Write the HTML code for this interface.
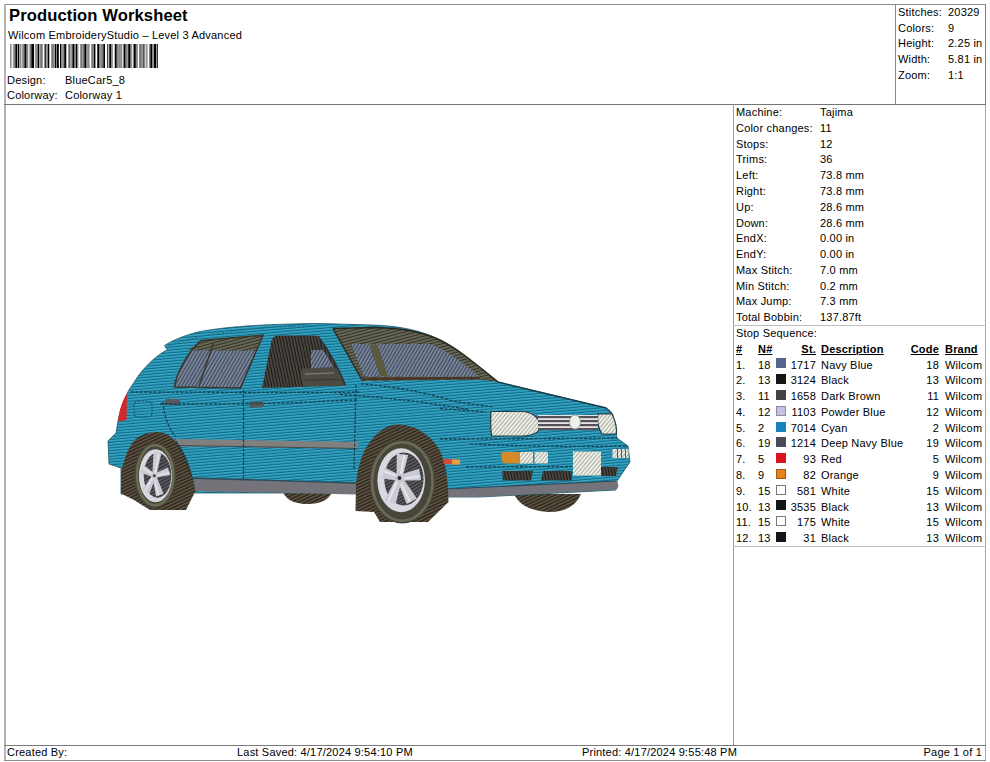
<!DOCTYPE html>
<html><head><meta charset="utf-8">
<style>
html,body{margin:0;padding:0;background:#fff;width:990px;height:762px;overflow:hidden;position:relative}
body{font-family:"Liberation Sans",sans-serif;font-size:11px;line-height:12px;color:#000;letter-spacing:0.2px}
.t{position:absolute;white-space:nowrap}
.ln{position:absolute;background:#8a8a8a}
.b{font-weight:bold;text-decoration:underline}
.r{text-align:right}
.sw{position:absolute;width:10px;height:10px;box-sizing:border-box}
#car{position:absolute;left:0;top:0}
</style></head><body>
<!-- frame lines -->
<div class="ln" style="left:4px;top:4px;width:982px;height:1px"></div>
<div class="ln" style="left:4px;top:4px;width:2px;height:757px;background:#b4b4b4"></div>
<div class="ln" style="left:985px;top:4px;width:1px;height:101px;background:#808080"></div><div class="ln" style="left:985px;top:105px;width:1px;height:656px;background:#a8a8a8"></div>
<div class="ln" style="left:4px;top:760px;width:982px;height:1px"></div>
<div class="ln" style="left:4px;top:104px;width:982px;height:1px;background:#757575"></div>
<div class="ln" style="left:895px;top:4px;width:1px;height:100px"></div>
<div class="ln" style="left:733px;top:104px;width:1px;height:641px;background:#9a9a9a"></div>
<div class="ln" style="left:733px;top:325px;width:253px;height:1px;background:#c0c0c0"></div>
<div class="ln" style="left:733px;top:546px;width:253px;height:1px;background:#c0c0c0"></div>
<div class="ln" style="left:4px;top:745px;width:982px;height:1px;background:#7a7a7a"></div>

<!-- header -->
<div class="t" style="left:9px;top:6px;font:bold 16.6px/19px 'Liberation Sans';letter-spacing:0.1px">Production Worksheet</div>
<div class="t" style="left:8px;top:29px">Wilcom EmbroideryStudio – Level 3 Advanced</div>
<svg style="position:absolute;left:10px;top:44px" width="148" height="24" id="bc"><rect x="0" width="1" height="24" fill="#888"/><rect x="1" width="1" height="24" fill="#bbb"/><rect x="2" width="1" height="24" fill="#eee"/><rect x="3" width="1" height="24" fill="#999"/><rect x="4" width="1" height="24" fill="#888"/><rect x="5" width="1" height="24" fill="#444"/><rect x="6" width="1" height="24" fill="#000"/><rect x="7" width="1" height="24" fill="#999"/><rect x="8" width="1" height="24" fill="#000"/><rect x="9" width="1" height="24" fill="#aaa"/><rect x="10" width="1" height="24" fill="#888"/><rect x="11" width="1" height="24" fill="#ccc"/><rect x="12" width="1" height="24" fill="#999"/><rect x="13" width="1" height="24" fill="#888"/><rect x="14" width="1" height="24" fill="#555"/><rect x="15" width="1" height="24" fill="#000"/><rect x="16" width="1" height="24" fill="#777"/><rect x="17" width="1" height="24" fill="#888"/><rect x="18" width="1" height="24" fill="#ddd"/><rect x="19" width="1" height="24" fill="#bbb"/><rect x="20" width="1" height="24" fill="#777"/><rect x="21" width="1" height="24" fill="#444"/><rect x="22" width="1" height="24" fill="#000"/><rect x="23" width="1" height="24" fill="#000"/><rect x="24" width="1" height="24" fill="#eee"/><rect x="25" width="1" height="24" fill="#999"/><rect x="26" width="1" height="24" fill="#888"/><rect x="27" width="1" height="24" fill="#777"/><rect x="28" width="1" height="24" fill="#000"/><rect x="29" width="1" height="24" fill="#aaa"/><rect x="30" width="1" height="24" fill="#888"/><rect x="31" width="1" height="24" fill="#777"/><rect x="32" width="1" height="24" fill="#999"/><rect x="34" width="1" height="24" fill="#888"/><rect x="35" width="1" height="24" fill="#333"/><rect x="36" width="1" height="24" fill="#999"/><rect x="37" width="1" height="24" fill="#888"/><rect x="38" width="1" height="24" fill="#000"/><rect x="39" width="1" height="24" fill="#bbb"/><rect x="41" width="1" height="24" fill="#999"/><rect x="42" width="1" height="24" fill="#777"/><rect x="43" width="1" height="24" fill="#888"/><rect x="44" width="1" height="24" fill="#999"/><rect x="45" width="1" height="24" fill="#000"/><rect x="46" width="1" height="24" fill="#888"/><rect x="47" width="1" height="24" fill="#000"/><rect x="48" width="1" height="24" fill="#333"/><rect x="50" width="1" height="24" fill="#000"/><rect x="51" width="1" height="24" fill="#888"/><rect x="52" width="1" height="24" fill="#999"/><rect x="53" width="1" height="24" fill="#888"/><rect x="54" width="1" height="24" fill="#333"/><rect x="55" width="1" height="24" fill="#000"/><rect x="56" width="1" height="24" fill="#bbb"/><rect x="58" width="1" height="24" fill="#999"/><rect x="59" width="1" height="24" fill="#666"/><rect x="60" width="1" height="24" fill="#aaa"/><rect x="61" width="1" height="24" fill="#999"/><rect x="62" width="1" height="24" fill="#555"/><rect x="63" width="1" height="24" fill="#000"/><rect x="64" width="1" height="24" fill="#777"/><rect x="65" width="1" height="24" fill="#888"/><rect x="66" width="1" height="24" fill="#000"/><rect x="67" width="1" height="24" fill="#888"/><rect x="68" width="1" height="24" fill="#ccc"/><rect x="70" width="1" height="24" fill="#999"/><rect x="71" width="1" height="24" fill="#777"/><rect x="72" width="1" height="24" fill="#999"/><rect x="73" width="1" height="24" fill="#777"/><rect x="74" width="1" height="24" fill="#444"/><rect x="75" width="1" height="24" fill="#000"/><rect x="76" width="1" height="24" fill="#888"/><rect x="77" width="1" height="24" fill="#999"/><rect x="78" width="1" height="24" fill="#888"/><rect x="79" width="1" height="24" fill="#bbb"/><rect x="81" width="1" height="24" fill="#999"/><rect x="82" width="1" height="24" fill="#777"/><rect x="83" width="1" height="24" fill="#888"/><rect x="84" width="1" height="24" fill="#000"/><rect x="85" width="1" height="24" fill="#999"/><rect x="87" width="1" height="24" fill="#444"/><rect x="88" width="1" height="24" fill="#000"/><rect x="89" width="1" height="24" fill="#888"/><rect x="90" width="1" height="24" fill="#999"/><rect x="91" width="1" height="24" fill="#888"/><rect x="92" width="1" height="24" fill="#777"/><rect x="93" width="1" height="24" fill="#444"/><rect x="94" width="1" height="24" fill="#000"/><rect x="97" width="1" height="24" fill="#444"/><rect x="98" width="1" height="24" fill="#bbb"/><rect x="99" width="1" height="24" fill="#444"/><rect x="100" width="1" height="24" fill="#000"/><rect x="101" width="1" height="24" fill="#888"/><rect x="102" width="1" height="24" fill="#999"/><rect x="104" width="1" height="24" fill="#bbb"/><rect x="105" width="1" height="24" fill="#000"/><rect x="106" width="1" height="24" fill="#444"/><rect x="107" width="1" height="24" fill="#888"/><rect x="108" width="1" height="24" fill="#999"/><rect x="109" width="1" height="24" fill="#888"/><rect x="110" width="1" height="24" fill="#999"/><rect x="111" width="1" height="24" fill="#888"/><rect x="112" width="1" height="24" fill="#ddd"/><rect x="113" width="1" height="24" fill="#888"/><rect x="114" width="1" height="24" fill="#000"/><rect x="115" width="1" height="24" fill="#666"/><rect x="116" width="1" height="24" fill="#888"/><rect x="117" width="1" height="24" fill="#999"/><rect x="118" width="1" height="24" fill="#333"/><rect x="119" width="1" height="24" fill="#000"/><rect x="120" width="1" height="24" fill="#777"/><rect x="121" width="1" height="24" fill="#999"/><rect x="122" width="1" height="24" fill="#ddd"/><rect x="123" width="1" height="24" fill="#888"/><rect x="124" width="1" height="24" fill="#000"/><rect x="125" width="1" height="24" fill="#333"/><rect x="126" width="1" height="24" fill="#888"/><rect x="127" width="1" height="24" fill="#999"/><rect x="129" width="1" height="24" fill="#888"/><rect x="130" width="1" height="24" fill="#777"/><rect x="131" width="1" height="24" fill="#888"/><rect x="132" width="1" height="24" fill="#999"/><rect x="133" width="1" height="24" fill="#555"/><rect x="134" width="1" height="24" fill="#888"/><rect x="135" width="1" height="24" fill="#ccc"/><rect x="136" width="1" height="24" fill="#999"/><rect x="137" width="1" height="24" fill="#bbb"/><rect x="139" width="1" height="24" fill="#888"/><rect x="140" width="1" height="24" fill="#444"/><rect x="141" width="1" height="24" fill="#000"/><rect x="142" width="1" height="24" fill="#888"/><rect x="143" width="1" height="24" fill="#999"/><rect x="144" width="1" height="24" fill="#000"/><rect x="145" width="1" height="24" fill="#000"/><rect x="146" width="1" height="24" fill="#999"/><rect x="147" width="1" height="24" fill="#333"/></svg>
<div class="t" style="left:7px;top:74px">Design:</div>
<div class="t" style="left:65px;top:74px">BlueCar5_8</div>
<div class="t" style="left:7px;top:89px">Colorway:</div>
<div class="t" style="left:65px;top:89px">Colorway 1</div>

<div class="t" style="left:898px;top:6px">Stitches:</div><div class="t" style="left:948px;top:6px">20329</div>
<div class="t" style="left:898px;top:22px">Colors:</div><div class="t" style="left:948px;top:22px">9</div>
<div class="t" style="left:898px;top:37px">Height:</div><div class="t" style="left:948px;top:37px">2.25 in</div>
<div class="t" style="left:898px;top:53px">Width:</div><div class="t" style="left:948px;top:53px">5.81 in</div>
<div class="t" style="left:898px;top:69px">Zoom:</div><div class="t" style="left:948px;top:69px">1:1</div>

<!-- footer -->
<div class="t" style="left:7px;top:746px">Created By:</div>
<div class="t" style="left:237px;top:746px">Last Saved: 4/17/2024 9:54:10 PM</div>
<div class="t" style="left:582px;top:746px">Printed: 4/17/2024 9:55:48 PM</div>
<div class="t r" style="right:8px;top:746px">Page 1 of 1</div>

<!-- RIGHTPANEL -->
<div class="t" style="left:736px;top:106.0px">Machine:</div><div class="t" style="left:820px;top:106.0px">Tajima</div>
<div class="t" style="left:736px;top:121.8px">Color changes:</div><div class="t" style="left:820px;top:121.8px">11</div>
<div class="t" style="left:736px;top:137.6px">Stops:</div><div class="t" style="left:820px;top:137.6px">12</div>
<div class="t" style="left:736px;top:153.3px">Trims:</div><div class="t" style="left:820px;top:153.3px">36</div>
<div class="t" style="left:736px;top:169.1px">Left:</div><div class="t" style="left:820px;top:169.1px">73.8 mm</div>
<div class="t" style="left:736px;top:184.9px">Right:</div><div class="t" style="left:820px;top:184.9px">73.8 mm</div>
<div class="t" style="left:736px;top:200.7px">Up:</div><div class="t" style="left:820px;top:200.7px">28.6 mm</div>
<div class="t" style="left:736px;top:216.5px">Down:</div><div class="t" style="left:820px;top:216.5px">28.6 mm</div>
<div class="t" style="left:736px;top:232.2px">EndX:</div><div class="t" style="left:820px;top:232.2px">0.00 in</div>
<div class="t" style="left:736px;top:248.0px">EndY:</div><div class="t" style="left:820px;top:248.0px">0.00 in</div>
<div class="t" style="left:736px;top:263.8px">Max Stitch:</div><div class="t" style="left:820px;top:263.8px">7.0 mm</div>
<div class="t" style="left:736px;top:279.6px">Min Stitch:</div><div class="t" style="left:820px;top:279.6px">0.2 mm</div>
<div class="t" style="left:736px;top:295.4px">Max Jump:</div><div class="t" style="left:820px;top:295.4px">7.3 mm</div>
<div class="t" style="left:736px;top:311.1px">Total Bobbin:</div><div class="t" style="left:820px;top:311.1px">137.87ft</div>
<div class="t" style="left:736px;top:326.9px">Stop Sequence:</div>
<div class="t b" style="left:736px;top:342.7px">#</div><div class="t b" style="left:758px;top:342.7px">N#</div><div class="t b r" style="right:174px;top:342.7px">St.</div><div class="t b" style="left:821px;top:342.7px">Description</div><div class="t b r" style="right:51px;top:342.7px">Code</div><div class="t b" style="left:945px;top:342.7px">Brand</div>
<div class="t" style="left:736px;top:358.5px">1.</div><div class="t" style="left:758px;top:358.5px">18</div><div class="sw" style="left:776px;top:358px;background:#56638c;"></div><div class="t r" style="right:174px;top:358.5px">1717</div><div class="t" style="left:821px;top:358.5px">Navy Blue</div><div class="t r" style="right:51px;top:358.5px">18</div><div class="t" style="left:945px;top:358.5px">Wilcom</div>
<div class="t" style="left:736px;top:374.3px">2.</div><div class="t" style="left:758px;top:374.3px">13</div><div class="sw" style="left:776px;top:374px;background:#161616;"></div><div class="t r" style="right:174px;top:374.3px">3124</div><div class="t" style="left:821px;top:374.3px">Black</div><div class="t r" style="right:51px;top:374.3px">13</div><div class="t" style="left:945px;top:374.3px">Wilcom</div>
<div class="t" style="left:736px;top:390.0px">3.</div><div class="t" style="left:758px;top:390.0px">11</div><div class="sw" style="left:776px;top:390px;background:#424242;"></div><div class="t r" style="right:174px;top:390.0px">1658</div><div class="t" style="left:821px;top:390.0px">Dark Brown</div><div class="t r" style="right:51px;top:390.0px">11</div><div class="t" style="left:945px;top:390.0px">Wilcom</div>
<div class="t" style="left:736px;top:405.8px">4.</div><div class="t" style="left:758px;top:405.8px">12</div><div class="sw" style="left:776px;top:406px;background:#c4c2e0;border:1px solid #8c8aa8;"></div><div class="t r" style="right:174px;top:405.8px">1103</div><div class="t" style="left:821px;top:405.8px">Powder Blue</div><div class="t r" style="right:51px;top:405.8px">12</div><div class="t" style="left:945px;top:405.8px">Wilcom</div>
<div class="t" style="left:736px;top:421.6px">5.</div><div class="t" style="left:758px;top:421.6px">2</div><div class="sw" style="left:776px;top:422px;background:#1683bf;"></div><div class="t r" style="right:174px;top:421.6px">7014</div><div class="t" style="left:821px;top:421.6px">Cyan</div><div class="t r" style="right:51px;top:421.6px">2</div><div class="t" style="left:945px;top:421.6px">Wilcom</div>
<div class="t" style="left:736px;top:437.4px">6.</div><div class="t" style="left:758px;top:437.4px">19</div><div class="sw" style="left:776px;top:437px;background:#4b4b59;"></div><div class="t r" style="right:174px;top:437.4px">1214</div><div class="t" style="left:821px;top:437.4px">Deep Navy Blue</div><div class="t r" style="right:51px;top:437.4px">19</div><div class="t" style="left:945px;top:437.4px">Wilcom</div>
<div class="t" style="left:736px;top:453.2px">7.</div><div class="t" style="left:758px;top:453.2px">5</div><div class="sw" style="left:776px;top:453px;background:#d8141e;"></div><div class="t r" style="right:174px;top:453.2px">93</div><div class="t" style="left:821px;top:453.2px">Red</div><div class="t r" style="right:51px;top:453.2px">5</div><div class="t" style="left:945px;top:453.2px">Wilcom</div>
<div class="t" style="left:736px;top:468.9px">8.</div><div class="t" style="left:758px;top:468.9px">9</div><div class="sw" style="left:776px;top:469px;background:#e8801e;border:1px solid #a05a10;"></div><div class="t r" style="right:174px;top:468.9px">82</div><div class="t" style="left:821px;top:468.9px">Orange</div><div class="t r" style="right:51px;top:468.9px">9</div><div class="t" style="left:945px;top:468.9px">Wilcom</div>
<div class="t" style="left:736px;top:484.7px">9.</div><div class="t" style="left:758px;top:484.7px">15</div><div class="sw" style="left:776px;top:485px;background:#ffffff;border:1px solid #777;"></div><div class="t r" style="right:174px;top:484.7px">581</div><div class="t" style="left:821px;top:484.7px">White</div><div class="t r" style="right:51px;top:484.7px">15</div><div class="t" style="left:945px;top:484.7px">Wilcom</div>
<div class="t" style="left:736px;top:500.5px">10.</div><div class="t" style="left:758px;top:500.5px">13</div><div class="sw" style="left:776px;top:500px;background:#151515;"></div><div class="t r" style="right:174px;top:500.5px">3535</div><div class="t" style="left:821px;top:500.5px">Black</div><div class="t r" style="right:51px;top:500.5px">13</div><div class="t" style="left:945px;top:500.5px">Wilcom</div>
<div class="t" style="left:736px;top:516.3px">11.</div><div class="t" style="left:758px;top:516.3px">15</div><div class="sw" style="left:776px;top:516px;background:#ffffff;border:1px solid #777;"></div><div class="t r" style="right:174px;top:516.3px">175</div><div class="t" style="left:821px;top:516.3px">White</div><div class="t r" style="right:51px;top:516.3px">15</div><div class="t" style="left:945px;top:516.3px">Wilcom</div>
<div class="t" style="left:736px;top:532.1px">12.</div><div class="t" style="left:758px;top:532.1px">13</div><div class="sw" style="left:776px;top:532px;background:#151515;"></div><div class="t r" style="right:174px;top:532.1px">31</div><div class="t" style="left:821px;top:532.1px">Black</div><div class="t r" style="right:51px;top:532.1px">13</div><div class="t" style="left:945px;top:532.1px">Wilcom</div>
<!-- CAR -->
<svg id="car" width="990" height="762" viewBox="0 0 990 762">
<defs>
<pattern id="pTeal" width="8" height="2.8" patternUnits="userSpaceOnUse" patternTransform="rotate(-5)">
 <rect width="8" height="2.8" fill="#2895b4"/>
 <rect y="1.9" width="8" height="0.9" fill="#116888"/>
 <rect y="0.2" width="8" height="0.8" fill="#3fadca"/>
</pattern>
<pattern id="pDark" width="3" height="3" patternUnits="userSpaceOnUse" patternTransform="rotate(-12)">
 <rect width="3" height="3" fill="#4e4a44"/>
 <rect x="1.7" width="1.3" height="3" fill="#1e1b17"/>
</pattern>
<pattern id="pShadow" width="3" height="3" patternUnits="userSpaceOnUse" patternTransform="rotate(-25)">
 <rect width="3" height="3" fill="#675a48"/>
 <rect y="1.5" width="3" height="1.5" fill="#28231b"/>
</pattern>
<pattern id="pGlass" width="3" height="3" patternUnits="userSpaceOnUse" patternTransform="rotate(30)">
 <rect width="3" height="3" fill="#7c8aa0"/>
 <rect x="1.8" width="1.2" height="3" fill="#3c4657"/>
</pattern>
<pattern id="pFrame" width="3" height="3" patternUnits="userSpaceOnUse" patternTransform="rotate(75)">
 <rect width="3" height="3" fill="#6c6c5a"/>
 <rect x="1.8" width="1.2" height="3" fill="#33322a"/>
</pattern>
<pattern id="pWhite" width="3" height="3" patternUnits="userSpaceOnUse" patternTransform="rotate(40)">
 <rect width="3" height="3" fill="#eef0e8"/>
 <rect x="2" width="1" height="3" fill="#a9ada2"/>
</pattern>
<pattern id="pRim" width="3" height="3" patternUnits="userSpaceOnUse" patternTransform="rotate(-30)">
 <rect width="3" height="3" fill="#5c5c60"/>
 <rect y="1.8" width="3" height="1.2" fill="#2c2c30"/>
</pattern>
</defs>
<path d="M283,492 C287,502 298,504 308,504 C320,504 329,500 332,492 Z" fill="url(#pShadow)"/>
<path d="M514,494 C520,508 538,512 550,512 C565,512 576,506 581,494 Z" fill="url(#pShadow)"/>
<path d="M164.5,345.5 C175,339 186,335 200,331.5 C225,327 260,324 320,323.5 L372,325 C400,326 420,330 440,340 C460,350 478,366 498,382 L606,408 C612,413 615,425 617,438 L628,446 L630,462 L617,481 L616,490 L480,497 L446,497 L356,493 L195,493 L121,494 L121,468 L109,464 L108,441 L116,433 L118,421 C121,406 126,393 133,384 C140,372 152,358 167.5,349.5 Z" fill="url(#pTeal)"/>
<path d="M164.5,345.5 C175,339 186,335 200,331.5 C225,327 260,324 320,323.5 L372,325 C400,326 420,330 440,340 C460,350 478,366 498,382 L606,408 C612,413 615,425 617,438 L628,446 L630,462 L617,481 L616,490 L480,497 L446,497 L356,493 L195,493 L121,494 L121,468 L109,464 L108,441 L116,433 L118,421 C121,406 126,393 133,384 C140,372 152,358 167.5,349.5 Z" fill="none" stroke="#1d5566" stroke-width="1" opacity="0.8"/>
<path d="M201,340.6 L263,335.2 L240.5,388 L174.5,387 C176,375 186,354 201,340.6 Z" fill="url(#pGlass)"/>
<path d="M201,340.6 L263,335.2 L256.5,350.5 L188,350.5 Z" fill="url(#pFrame)"/>
<path d="M201,340.6 L263,335.2 L240.5,388 L174.5,387 C176,375 186,354 201,340.6 Z" fill="none" stroke="#3a372e" stroke-width="1.6"/>
<path d="M213.5,343 L199,386" stroke="#3d3a30" stroke-width="1.6"/>
<path d="M278,335.5 L316,335.5 C326,346 336,362 346,385.5 L262,388 L271.5,341 C272.5,337.5 274.5,335.5 278,335.5 Z" fill="url(#pDark)"/>
<path d="M311,350 L323,350 C327,356 331,362 334,368 L311,368 Z" fill="url(#pGlass)"/>
<path d="M302,368.5 L334,367 C340,371 344,378 346,386 L304,386 C301,381 301,374 302,368.5 Z" fill="#4d4a42"/>
<path d="M305,374 L334,373" stroke="#7a756a" stroke-width="1.3"/>
<path d="M305,380 L340,379.5" stroke="#3a3630" stroke-width="1"/>
<path d="M333,328.5 L372,327.5 C400,328 420,331 440,340 C460,350 478,366 498,382 L479,379.5 L362.5,381 Z" fill="url(#pFrame)"/>
<path d="M351,344 L431,344 C445,350 460,360 480,377 L364,376.5 Z" fill="url(#pGlass)"/>
<path d="M369,344.5 L377.5,344.5 L388,376 L380,376 Z" fill="#5a5a40"/>
<path d="M333,328.5 L372,327.5 C400,328 420,331 440,340 C460,350 478,366 498,382" stroke="#2a2a20" stroke-width="1.5" fill="none"/>
<path d="M363,379 L480,378" stroke="#4a3424" stroke-width="2.4" fill="none"/>
<path d="M333,328.5 L362.5,381" stroke="#2a2a22" stroke-width="1.4" fill="none"/>
<path d="M318,336 C327,348 337,364 345,385" stroke="#2a3436" stroke-width="1.6" fill="none"/>
<path d="M498,382 L606,408 C610,411 612,413 613,416" stroke="#1a3f4a" stroke-width="1.4" fill="none"/>
<path d="M176,439 L358,442 L358,448.5 L178,446.5 Z" fill="#82807e"/>
<path d="M178,445.5 L358,448.5" stroke="#3e4a50" stroke-width="1" fill="none"/>
<path d="M189,478 L356,483 L446,487.5 L446,497 L356,494.5 L190,491 C188,488 188,482 189,478 Z" fill="#74737a"/>
<path d="M189,478 L356,483 L446,487.5" stroke="#2a4a56" stroke-width="1.3" fill="none"/>
<path d="M446,489 L616,481 C619,483 619,488 616,489.5 L480,497 L446,497 Z" fill="#74737a"/>
<path d="M446,489 L616,481" stroke="#2a4a56" stroke-width="1.2" fill="none"/>
<path d="M121,493.5 L121,474 C123,462 127,450 133,442 C139,435 148,432 159,432 C170,433 180,443 186,457 C191,469 194,481 195.5,491 L186,510 L150,510 L134,500 Z" fill="url(#pShadow)"/>
<path d="M355.5,511 L356,486 C357,470 361,455 369,443 C377,432 387,424.5 398,424.5 C414,424.5 430,434 439,449 C446,462 448,478 448.5,502 L428,522 L380,522 L374,512 Z" fill="url(#pShadow)"/>
<ellipse cx="155.2" cy="475.3" rx="21" ry="32.8" fill="#48463a"/>
<ellipse cx="155.2" cy="475.3" rx="18.2" ry="29.999999999999996" fill="none" stroke="#6c6b55" stroke-width="2.6"/>
<ellipse cx="155.5" cy="475.8" rx="16.5" ry="26.5" fill="#d8d9e0"/>
<ellipse cx="157.5" cy="475.3" rx="13.8" ry="22.5" fill="url(#pRim)"/>
<path d="M156.3,476.0 L161.3,453.5 L153.5,452.5 L152.3,475.6Z" fill="#c9cad2"/>
<path d="M154.9,475.9 L158.7,453.2" stroke="#e4e5ec" stroke-width="1.5"/>
<path d="M154.9,477.7 L170.3,475.0 L167.8,467.4 L153.7,473.9Z" fill="#c9cad2"/>
<path d="M154.5,476.4 L169.5,472.4" stroke="#e4e5ec" stroke-width="1.5"/>
<path d="M152.4,476.4 L156.0,496.2 L163.6,493.9 L156.2,475.2Z" fill="#c9cad2"/>
<path d="M153.7,476.0 L158.6,495.4" stroke="#e4e5ec" stroke-width="1.5"/>
<path d="M152.5,474.9 L142.3,490.1 L149.3,493.7 L156.1,476.7Z" fill="#c9cad2"/>
<path d="M153.8,475.5 L144.7,491.3" stroke="#e4e5ec" stroke-width="1.5"/>
<path d="M155.3,474.1 L144.0,465.3 L140.2,472.3 L153.3,477.5Z" fill="#c9cad2"/>
<path d="M154.6,475.3 L142.7,467.7" stroke="#e4e5ec" stroke-width="1.5"/>
<circle cx="154.3" cy="475.8" r="2.9" fill="#c4c5cd"/>
<circle cx="154.3" cy="475.8" r="1.3" fill="#26262a"/>
<ellipse cx="402.3" cy="481.5" rx="33" ry="42" fill="#48463a"/>
<ellipse cx="402.3" cy="481.5" rx="30.2" ry="39.2" fill="none" stroke="#6c6b55" stroke-width="2.6"/>
<ellipse cx="401.2" cy="480.2" rx="23.8" ry="32" fill="#d8d9e0"/>
<ellipse cx="403.9" cy="479" rx="19.6" ry="26.5" fill="url(#pRim)"/>
<path d="M402.3,478.3 L408.2,455.1 L396.8,453.8 L396.5,477.7Z" fill="#c9cad2"/>
<path d="M400.3,478.1 L404.3,454.7" stroke="#e4e5ec" stroke-width="2.2"/>
<path d="M399.9,480.8 L421.1,480.2 L419.0,468.8 L398.9,475.2Z" fill="#c9cad2"/>
<path d="M399.6,478.8 L420.4,476.3" stroke="#e4e5ec" stroke-width="2.2"/>
<path d="M396.9,479.4 L406.7,503.9 L416.8,498.4 L401.9,476.6Z" fill="#c9cad2"/>
<path d="M398.6,478.4 L410.1,502.0" stroke="#e4e5ec" stroke-width="2.2"/>
<path d="M396.7,477.0 L384.8,499.9 L395.6,503.9 L402.1,479.0Z" fill="#c9cad2"/>
<path d="M398.6,477.7 L388.5,501.3" stroke="#e4e5ec" stroke-width="2.2"/>
<path d="M400.2,475.2 L385.0,467.5 L381.8,478.6 L398.6,480.8Z" fill="#c9cad2"/>
<path d="M399.6,477.2 L383.9,471.3" stroke="#e4e5ec" stroke-width="2.2"/>
<circle cx="399.4" cy="478" r="4.2" fill="#c4c5cd"/>
<circle cx="399.4" cy="478" r="1.9" fill="#26262a"/>
<path d="M127,394 L126.5,420 L118,421.5 C119,411 122,401 127,394 Z" fill="#d4282a"/>
<rect x="134" y="401" width="18" height="16" rx="4" fill="none" stroke="#1a5a6e" stroke-width="1.1" stroke-dasharray="2.5,1"/>
<rect x="165" y="399" width="15" height="6" rx="2.5" fill="#57585c"/>
<rect x="249" y="401.5" width="15" height="6" rx="2.5" fill="#57585c"/>
<path d="M491,411.5 L524,411.5 C534,413 540,419 540.5,426 C540,432 533,436 522,436 L491.5,436 C490.5,428 490.5,420 491,411.5 Z" fill="url(#pWhite)" stroke="#243e46" stroke-width="1.2"/>
<path d="M598,414 L612,414 C615,420 617,427 616.5,434 L602,434 C598,428 597,420 598,414 Z" fill="url(#pWhite)" stroke="#243e46" stroke-width="1.2"/>
<rect x="538" y="415" width="60" height="15" fill="#e4e4e4"/>
<rect x="538" y="416" width="60" height="2.2" fill="#57505a"/>
<rect x="538" y="420" width="60" height="2.2" fill="#57505a"/>
<rect x="538" y="424" width="60" height="2.2" fill="#57505a"/>
<rect x="538" y="428" width="60" height="2.2" fill="#57505a"/>
<ellipse cx="575" cy="422" rx="5.5" ry="7" fill="#eef0ea" stroke="#8a9a9a" stroke-width="0.8"/>
<path d="M502,452 L520,452 L520,463.5 L504,463.5 C501,461 501,455 502,452 Z" fill="#d48a28"/>
<rect x="520" y="452" width="28" height="11.5" fill="url(#pWhite)"/>
<rect x="533" y="452" width="1.6" height="11.5" fill="#2a8aa8"/>
<path d="M443,459 L460,459.5 L460,464.5 L444,464 Z" fill="#d6483a"/>
<rect x="452" y="459.5" width="8" height="5" fill="#e6a040"/>
<rect x="573" y="451.5" width="28" height="24" fill="url(#pWhite)"/>
<path d="M502,471 L533,471 L531,480.5 L503,480.5 Z" fill="url(#pDark)"/>
<path d="M543,471 L572,471 L572,480.5 L541,480.5 Z" fill="url(#pDark)"/>
<path d="M601,467 L618,467 L616,476 L601,476 Z" fill="url(#pDark)"/>
<rect x="612.5" y="449" width="16" height="9" fill="url(#pWhite)"/>
<rect x="617" y="449" width="1" height="9" fill="#2a6a80"/>
<rect x="621" y="449" width="1" height="9" fill="#2a6a80"/>
<rect x="625" y="449" width="1" height="9" fill="#2a6a80"/>
<path d="M131,392 C200,392 300,393 360,392" fill="none" stroke="#123e4c" stroke-width="1.3" stroke-dasharray="3,1.5" opacity="0.95"/>
<path d="M160,404 C200,404 260,404 300,402.5 C330,401 350,400 358,400" fill="none" stroke="#123e4c" stroke-width="1.3" stroke-dasharray="3,1.5" opacity="0.95"/>
<path d="M243.5,390 L243.5,478" fill="none" stroke="#123e4c" stroke-width="1.3" stroke-dasharray="3,1.5" opacity="0.95"/>
<path d="M356,385 L354,470" fill="none" stroke="#123e4c" stroke-width="1.3" stroke-dasharray="3,1.5" opacity="0.95"/>
<path d="M163,402 C164,415 168,428 176,437" fill="none" stroke="#123e4c" stroke-width="1.3" stroke-dasharray="3,1.5" opacity="0.95"/>
<path d="M361,384 C390,386 420,391 453,401 C470,404 485,406 493,407" fill="none" stroke="#123e4c" stroke-width="1.3" stroke-dasharray="3,1.5" opacity="0.95"/>
<path d="M340,394.5 C380,397 420,401 469,409.5" fill="none" stroke="#123e4c" stroke-width="1.3" stroke-dasharray="3,1.5" opacity="0.95"/>
<path d="M440,439 C500,439 560,438.5 617,438" fill="none" stroke="#123e4c" stroke-width="1.3" stroke-dasharray="3,1.5" opacity="0.95"/>
<path d="M176,441 C182,452 188,466 193,480" fill="none" stroke="#123e4c" stroke-width="1.3" stroke-dasharray="3,1.5" opacity="0.95"/>
<path d="M470,444 C520,446 570,447 628,446" fill="none" stroke="#123e4c" stroke-width="1.3" stroke-dasharray="3,1.5" opacity="0.95"/>
<path d="M466,467 L572,466.5" fill="none" stroke="#123e4c" stroke-width="1.3" stroke-dasharray="3,1.5" opacity="0.95"/>
<path d="M440,408.5 L486,412" fill="none" stroke="#123e4c" stroke-width="1.3" stroke-dasharray="3,1.5" opacity="0.95"/>
<path d="M165,348 C190,336 240,327 320,325.5" fill="none" stroke="#1e6b80" stroke-width="1" stroke-dasharray="3,1.5" opacity="0.8"/>
</svg>
</body></html>
